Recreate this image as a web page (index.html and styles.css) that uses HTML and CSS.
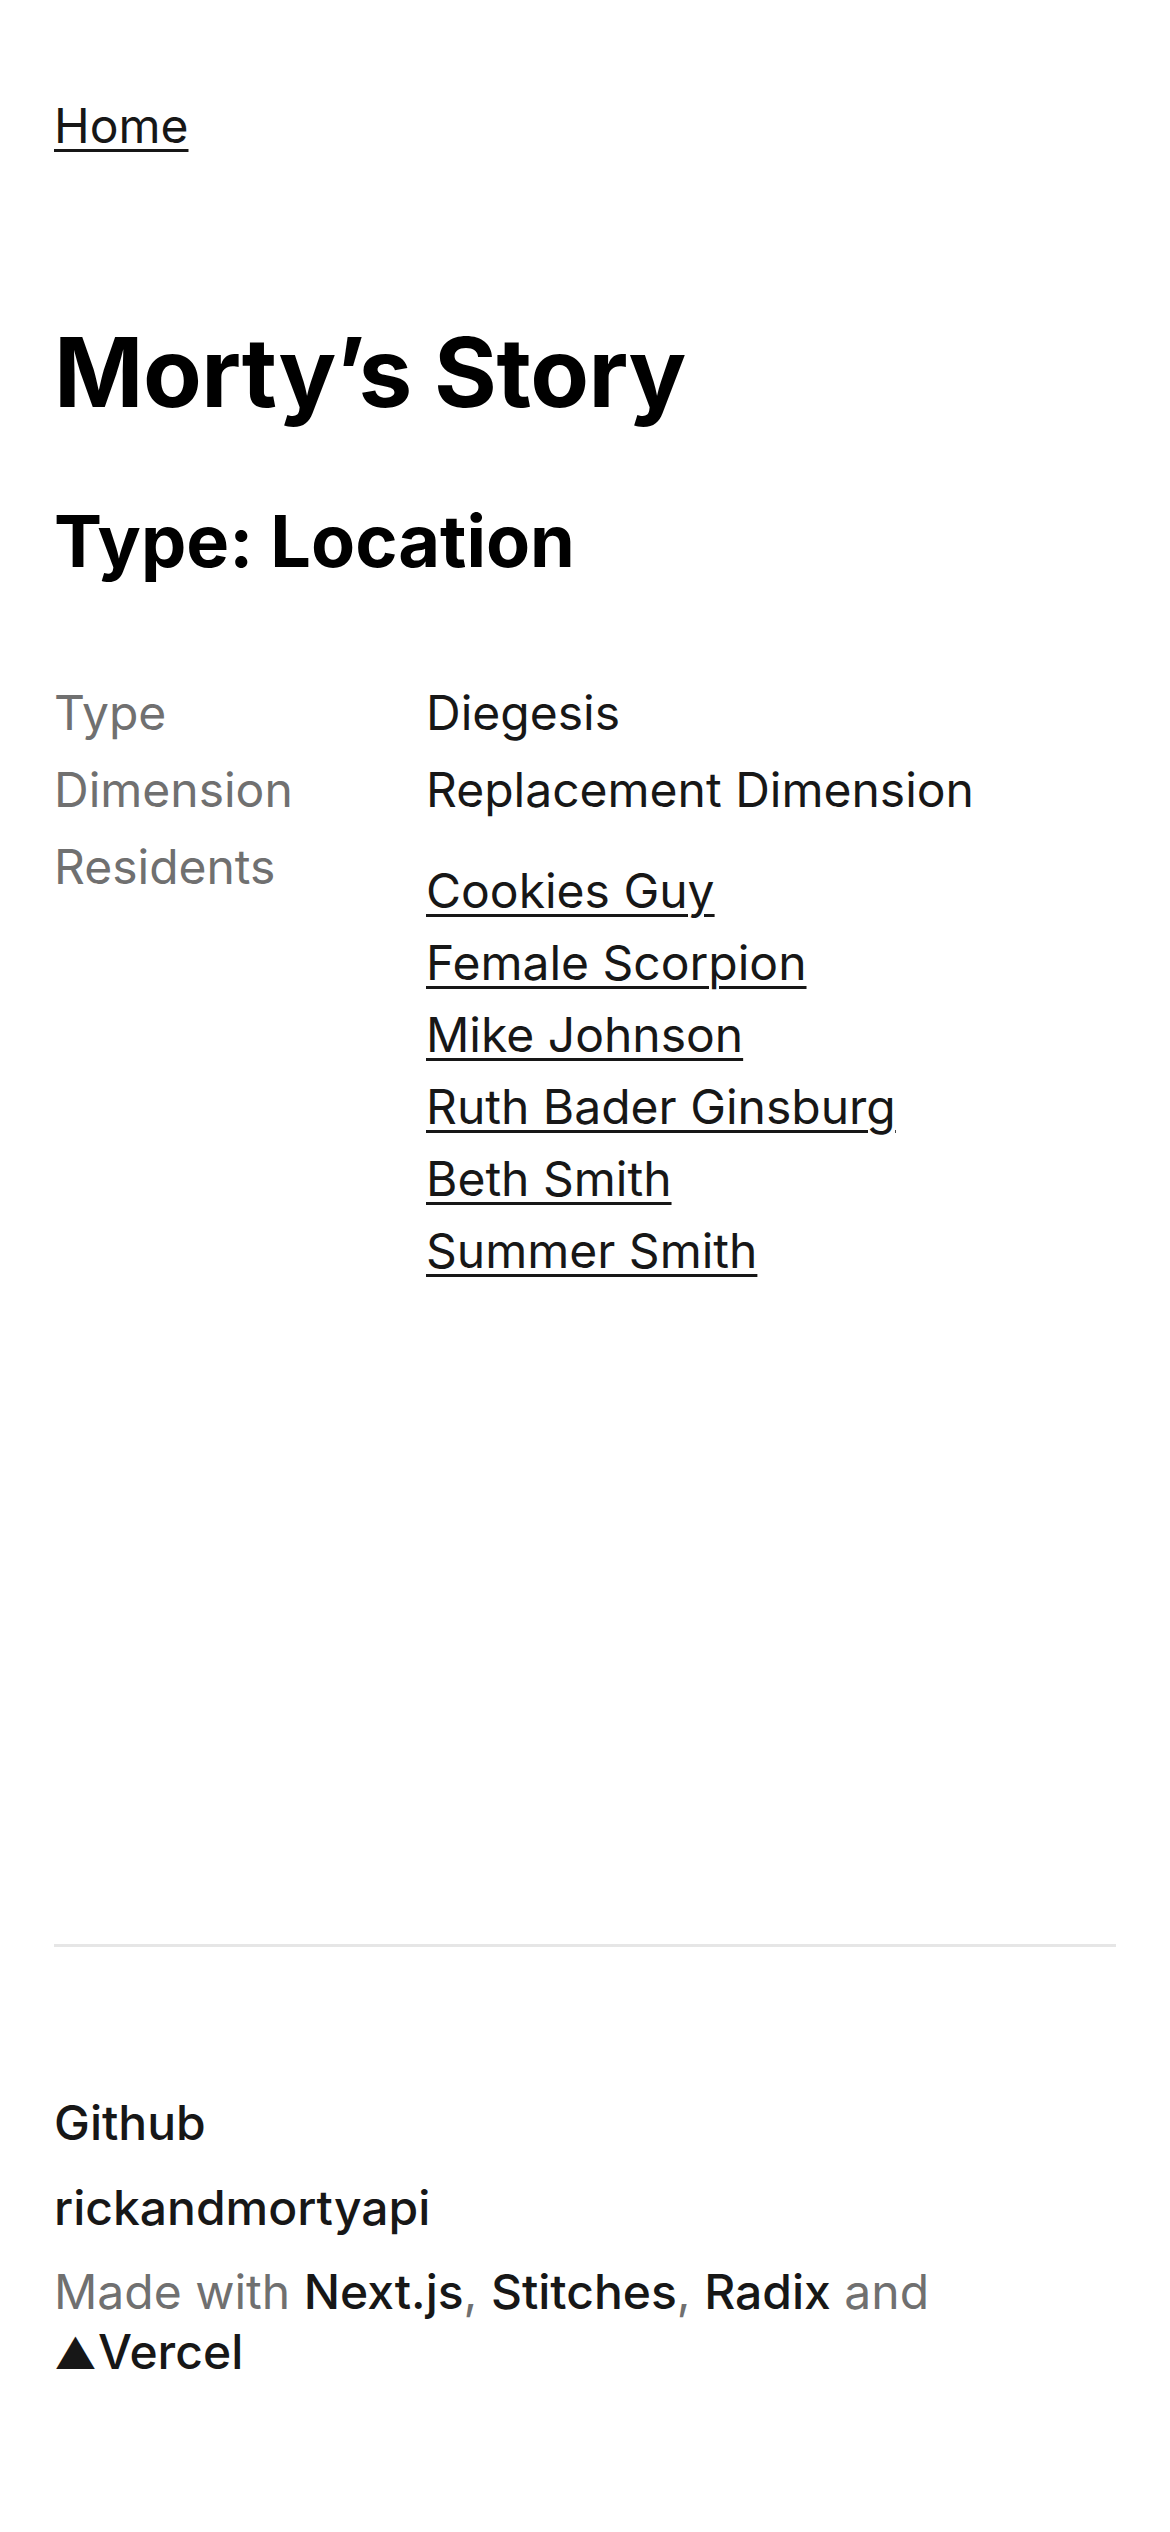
FILE: index.html
```html
<!DOCTYPE html>
<html lang="en">
<head>
<meta charset="utf-8">
<title>Morty’s Story</title>
<link rel="stylesheet" href="styles.css">
</head>
<body>
<div class="page">
  <nav class="nav"><a class="link" href="#">Home</a></nav>
  <main class="main">
    <h1 class="title">Morty’s Story</h1>
    <h2 class="subtitle">Type: Location</h2>
    <dl class="details">
      <dt class="label">Type</dt>
      <dd class="value">Diegesis</dd>
      <dt class="label">Dimension</dt>
      <dd class="value">Replacement Dimension</dd>
      <dt class="label">Residents</dt>
      <dd class="value">
        <ul class="residents">
          <li><a class="link" href="#">Cookies Guy</a></li>
          <li><a class="link" href="#">Female Scorpion</a></li>
          <li><a class="link" href="#">Mike Johnson</a></li>
          <li><a class="link" href="#">Ruth Bader Ginsburg</a></li>
          <li><a class="link" href="#">Beth Smith</a></li>
          <li><a class="link" href="#">Summer Smith</a></li>
        </ul>
      </dd>
    </dl>
  </main>
  <footer class="footer">
    <hr class="rule">
    <div class="footer-links">
      <a class="plain" href="#">Github</a>
      <a class="plain" href="#">rickandmortyapi</a>
    </div>
    <p class="credits">Made with <a class="plain" href="#">Next.js</a>, <a class="plain" href="#">Stitches</a>, <a class="plain" href="#">Radix</a> and <a class="plain nowrap" href="#"><span class="tri">▲</span>Vercel</a></p>
  </footer>
</div>
</body>
</html>
```
FILE: styles.css
```css
* { box-sizing: border-box; }
html, body { margin: 0; padding: 0; background: #fff; }
body {
  font-family: Inter, "Noto Sans", "Liberation Sans", sans-serif;
  color: #171717;
  font-size: 48px;
  line-height: 72px;
}
.page {
  padding: 90px 54px 120px;
  min-height: 2532px;
}
.link {
  color: #171717;
  text-decoration: underline;
  text-decoration-thickness: 3px;
  text-underline-offset: 6px;
}
.plain {
  color: #171717;
  text-decoration: none;
  font-weight: 500;
}
.nowrap { white-space: nowrap; }
.nav { line-height: 72px; }
.title {
  margin: 150px 0 0;
  font-size: 96px;
  line-height: 120px;
  font-weight: 700;
  color: #000;
  letter-spacing: -0.5px;
}
.subtitle {
  margin: 64px 0 0;
  font-size: 72px;
  line-height: 90px;
  font-weight: 700;
  color: #000;
}
.details {
  margin: 88px 0 0;
  display: grid;
  grid-template-columns: 372px 1fr;
  line-height: 77px;
}
.label { margin: 0; color: #707070; }
.value { margin: 0; color: #171717; }
.residents {
  list-style: none;
  margin: 0;
  padding: 27px 0 0;
  line-height: 72px;
}
.footer { margin-top: 657px; }
.rule {
  border: 0;
  height: 3px;
  background: #e6e6e6;
  margin: 0;
}
.footer-links {
  display: flex;
  flex-direction: column;
  gap: 13px;
  margin-top: 140px;
}
.credits {
  margin: 18px 0 0;
  line-height: 60px;
  color: #707070;
}
.tri {
  font-size: 42px;
  margin-right: 1px;
}
```
